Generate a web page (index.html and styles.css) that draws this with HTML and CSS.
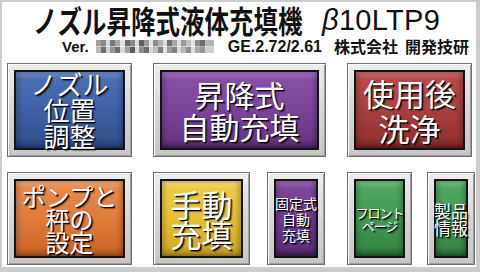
FILE: index.html
```html
<!DOCTYPE html>
<html lang="ja">
<head>
<meta charset="utf-8">
<title>ノズル昇降式液体充填機</title>
<link rel="stylesheet" href="styles.css">
</head>
<body>
<div class="screen">
  <header class="head">
    <h1 class="title"><span class="title-jp">ノズル昇降式液体充填機</span><span class="title-model"><i class="beta">β</i>10LTP9</span></h1>
    <div class="ver">
      <span class="ver-label">Ver.</span>
      <span class="mosaic" aria-hidden="true"></span>
      <span class="ver-num">GE.2.72/2.61</span>
      <span class="company">株式会社</span>
      <span class="company second">開発技研</span>
    </div>
  </header>
  <main class="panel">
    <div class="row row-top">
      <div class="btn w125"><div class="face blue t-blue">ノズル<br>位置<br>調整</div></div>
      <div class="btn w173 gap21"><div class="face purple t-purple">昇降式<br>自動充填</div></div>
      <div class="btn w125 gap21"><div class="face red t-red">使用後<br>洗浄</div></div>
    </div>
    <div class="row row-bottom">
      <div class="btn w125"><div class="face orange t-orange">ポンプと<br>秤の<br>設定</div></div>
      <div class="btn w97 gap21"><div class="face yellow t-yellow">手動<br>充填</div></div>
      <div class="btn w58 gap17"><div class="face violet t-small">固定式<br>自動<br>充填</div></div>
      <div class="btn w65 gap22"><div class="face green t-front">フロント<br>ページ</div></div>
      <div class="btn w48 gap15"><div class="face green t-info">製品<br>情報</div></div>
    </div>
  </main>
</div>
</body>
</html>
```

FILE: styles.css
```css
* { box-sizing: border-box; margin: 0; padding: 0; }
html, body { width: 480px; height: 272px; overflow: hidden; background: #fff; }
body { font-family: "Noto Sans CJK JP", "Noto Sans", sans-serif; }

.screen {
  width: 480px; height: 272px;
  border-style: solid;
  border-color: #cccccc;
  border-width: 2px 4px 5px 2px;
  background: #fff;
  display: flex; flex-direction: column;
}

.head { height: 53px; display: flex; flex-direction: column; }
.title {
  height: 36px; display: flex; align-items: center;
  padding-left: 31px; color: #111; font-weight: 700;
  white-space: nowrap;
}
.title-jp {
  display: inline-block; font-size: 31px; line-height: 36px;
  transform: scaleX(.79); transform-origin: left center;
  margin-right: -52px;
}
.title-model {
  font-family: "Liberation Sans", Arial, sans-serif;
  font-size: 29px; font-weight: 400; line-height: 36px;
  letter-spacing: .3px;
}
.beta { font-style: italic; }

.ver {
  height: 17px; display: flex; align-items: center;
  padding-left: 60px; color: #111; font-weight: 700;
  white-space: nowrap;
}
.ver-label {
  font-family: "Liberation Sans", Arial, sans-serif;
  font-size: 15px; line-height: 17px;
}
.mosaic {
  width: 118px; height: 13px; margin-left: 7px;
  background-image:
    linear-gradient(90deg,
      #a0a0a0 0 5px, #8a8a8a 5px 10px, #d8d8d8 10px 14px,
      #7a7a7a 14px 19px, #a8a8a8 19px 24px, #e0e0e0 24px 29px,
      #6a6a6a 29px 34px, #888 34px 39px, #ddd 39px 43px,
      #5f5f5f 43px 48px, #999 48px 53px, #e2e2e2 53px 57px,
      #8c8c8c 57px 62px, #b0b0b0 62px 67px, #ddd 67px 71px,
      #707070 71px 76px, #a5a5a5 76px 81px, #e0e0e0 81px 85px,
      #9a9a9a 85px 90px, #c0c0c0 90px 95px, #e4e4e4 95px 99px,
      #8a8a8a 99px 104px, #6a6a6a 104px 109px, #b5b5b5 109px 118px),
    linear-gradient(90deg,
      #b8b8b8 0 5px, #6e6e6e 5px 10px, #d0d0d0 10px 14px,
      #959595 14px 19px, #6c6c6c 19px 24px, #d8d8d8 24px 29px,
      #a0a0a0 29px 34px, #5a5a5a 34px 39px, #e0e0e0 39px 43px,
      #8e8e8e 43px 48px, #6c6c6c 48px 53px, #d5d5d5 53px 57px,
      #bdbdbd 57px 62px, #7c7c7c 62px 67px, #e0e0e0 67px 71px,
      #9a9a9a 71px 76px, #808080 76px 81px, #d8d8d8 81px 85px,
      #b4b4b4 85px 90px, #8e8e8e 90px 95px, #dcdcdc 95px 99px,
      #a8a8a8 99px 104px, #959595 104px 109px, #cfcfcf 109px 118px);
  background-size: 100% 50%, 100% 50%;
  background-position: top, bottom;
  background-repeat: no-repeat;
}
.ver-num {
  margin-left: 14px;
  font-family: "Liberation Sans", Arial, sans-serif;
  font-size: 16px; line-height: 17px;
}
.company { margin-left: 12px; font-size: 16px; line-height: 17px; }
.company.second { margin-left: 7px; }

.panel {
  flex: 1; padding: 8px 0 0 5px;
  display: flex; flex-direction: column; gap: 15px;
}
.row { display: flex; }
.row-top { height: 94px; }
.row-bottom { height: 93px; }

.btn {
  height: 100%; padding: 6px;
  border: 1px solid #6f6f6f;
  background: linear-gradient(180deg, #eeeeee 0%, #d6d6d6 50%, #c6c6c6 100%);
  box-shadow: inset 1px 1px 0 #ffffff, inset -1px -1px 0 #9c9c9c;
}
.w125 { width: 125px; }
.w173 { width: 173px; }
.w97 { width: 97px; }
.w58 { width: 58px; }
.w65 { width: 65px; }
.w48 { width: 48px; }
.gap21 { margin-left: 21px; }
.gap17 { margin-left: 17px; }
.gap22 { margin-left: 22px; }
.gap15 { margin-left: 15px; }

.face {
  height: 100%;
  display: flex; align-items: center; justify-content: center;
  text-align: center;
  border: 2px solid #141414;
  color: #fff;
  text-shadow: 1px 1px 0 #000, 2px 2px 1px rgba(0,0,0,.45);
  box-shadow: inset 3px 0 4px rgba(0,0,0,.18), inset -3px 0 4px rgba(0,0,0,.22);
  white-space: nowrap;
}
.blue   { background: linear-gradient(180deg, #6f8fcc 0%, #4b6db2 10%, #3e60a5 50%, #33538f 88%, #223a6c 100%); }
.purple { background: linear-gradient(180deg, #a476be 0%, #8650a6 10%, #7a4398 50%, #6a3786 88%, #4a2261 100%); }
.red    { background: linear-gradient(180deg, #cf6f6f 0%, #b54a4a 10%, #a93f3f 50%, #953232 88%, #6c1f1f 100%); }
.orange { background: linear-gradient(180deg, #f6a56e 0%, #e8884a 10%, #e07b39 50%, #cd6a2c 88%, #a44f1c 100%); }
.yellow { background: linear-gradient(180deg, #f6dc6a 0%, #eccb44 10%, #e6c032 50%, #d4ac26 88%, #a8841a 100%); }
.violet { background: linear-gradient(180deg, #9a6cb8 0%, #7b4899 10%, #6f3d8e 50%, #5f317c 88%, #3f1c56 100%); }
.green  { background: linear-gradient(180deg, #74c383 0%, #4ea65e 10%, #429a52 50%, #378846 88%, #215c2c 100%); }

.t-blue   { font-size: 26px; line-height: 26px; }
.t-purple { font-size: 30px; line-height: 32px; }
.t-red    { font-size: 31px; line-height: 35px; }
.t-orange { font-size: 24px; line-height: 23px; }
.t-yellow { font-size: 31px; line-height: 30px; }
.t-small  { font-size: 14px; line-height: 16px; }
.t-front  { font-size: 13px; line-height: 13px; letter-spacing: -1px; }
.t-info   { font-size: 17px; line-height: 17px; }
```
